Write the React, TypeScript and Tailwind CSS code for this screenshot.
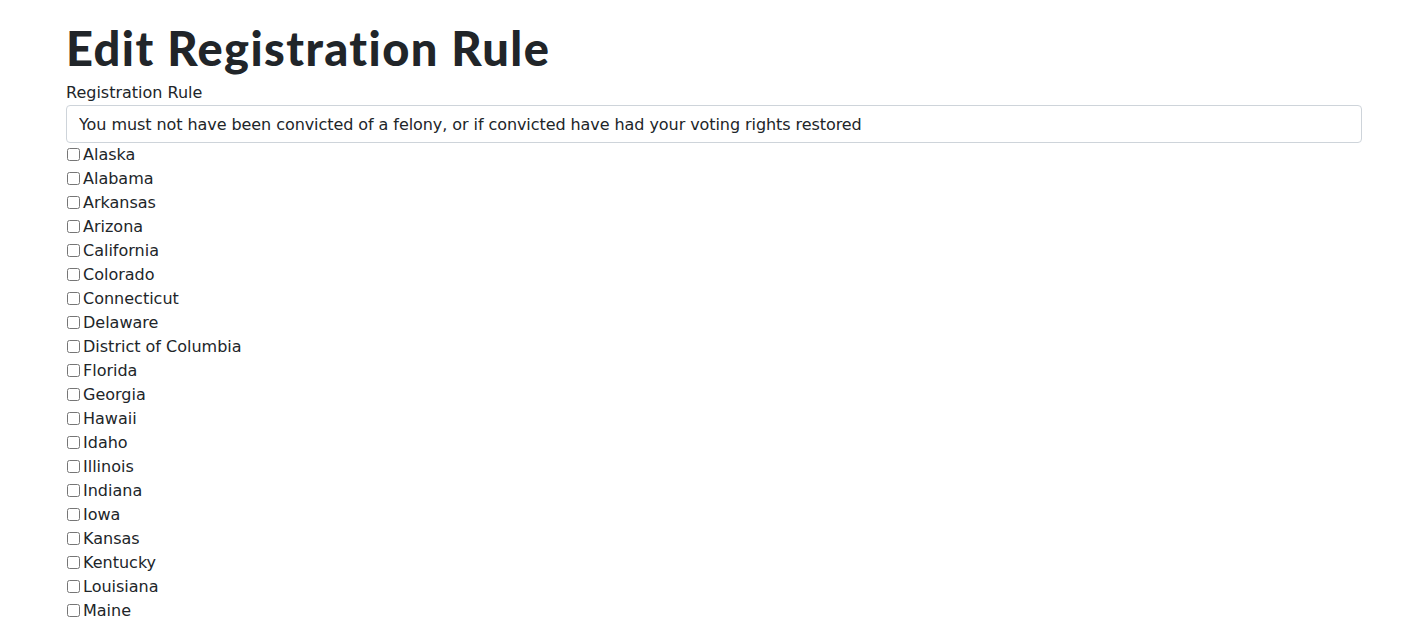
import { useState } from 'react'

const states = [
  'Alaska', 'Alabama', 'Arkansas', 'Arizona', 'California', 'Colorado', 'Connecticut', 'Delaware',
  'District of Columbia', 'Florida', 'Georgia', 'Hawaii', 'Idaho', 'Illinois', 'Indiana', 'Iowa',
  'Kansas', 'Kentucky', 'Louisiana', 'Maine', 'Maryland', 'Massachusetts', 'Michigan', 'Minnesota',
  'Mississippi', 'Missouri', 'Montana', 'Nebraska', 'Nevada', 'New Hampshire', 'New Jersey',
  'New Mexico', 'New York', 'North Carolina', 'North Dakota', 'Ohio', 'Oklahoma', 'Oregon',
  'Pennsylvania', 'Rhode Island', 'South Carolina', 'South Dakota', 'Tennessee', 'Texas', 'Utah',
  'Vermont', 'Virginia', 'Washington', 'West Virginia', 'Wisconsin', 'Wyoming',
]

export default function App() {
  const [rule, setRule] = useState(
    'You must not have been convicted of a felony, or if convicted have had your voting rights restored'
  )
  const [checked, setChecked] = useState<Record<string, boolean>>({})

  return (
    <div className="min-h-screen bg-white text-[#212529] font-['DejaVu_Sans',sans-serif]">
      <div className="w-[1296px] ml-[66px]">
        <h1 className="pt-[20px] text-[47px] leading-[56px] font-black tracking-[1.4px] font-['Lato',sans-serif]">
          Edit Registration Rule
        </h1>
        <label className="block mt-[5px] text-[16px] leading-[24px]">Registration Rule</label>
        <input
          value={rule}
          onChange={e => setRule(e.target.value)}
          className="block w-full h-[38px] px-[12px] border border-[#ced4da] rounded-[4px] text-[16px] tracking-[-0.07px] outline-none"
        />
        <div>
          {states.map(s => (
            <div key={s} className="flex items-center h-[24px] text-[16px]">
              <input
                type="checkbox"
                checked={!!checked[s]}
                onChange={() => setChecked({ ...checked, [s]: !checked[s] })}
                className="w-[13px] h-[13px] ml-[1px] mr-[3px] -mt-[2px]"
              />
              <span>{s}</span>
            </div>
          ))}
        </div>
      </div>
    </div>
  )
}
